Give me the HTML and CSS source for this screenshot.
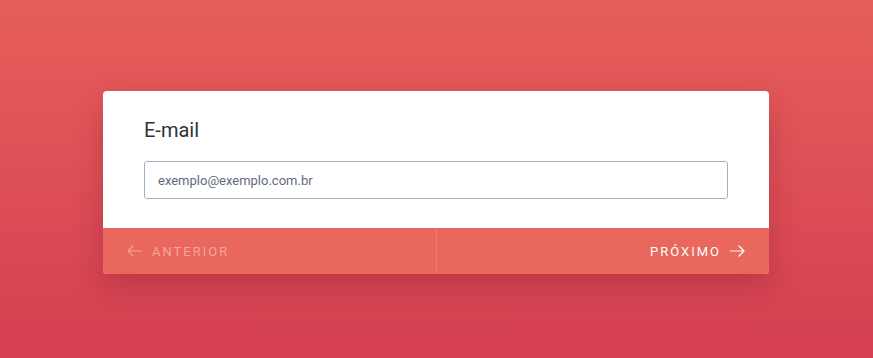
FILE: index.html
```html
<!DOCTYPE html>
<html lang="pt-BR">
<head>
<meta charset="utf-8">
<title>E-mail</title>
<link rel="stylesheet" href="styles.css">
</head>
<body>
<div class="stage">
  <div class="card">
    <div class="card-body">
      <label class="label" for="email">E-mail</label>
      <input id="email" class="field" type="text" placeholder="exemplo@exemplo.com.br">
    </div>
    <div class="card-footer">
      <button class="nav nav-prev" type="button">
        <svg class="arrow" width="15" height="12" viewBox="0 0 15 12" aria-hidden="true"><path d="M14.5 6H1M6 1L1 6l5 5" fill="none" stroke="currentColor" stroke-width="1.2" stroke-linecap="round" stroke-linejoin="round"/></svg>
        <span>ANTERIOR</span>
      </button>
      <button class="nav nav-next" type="button">
        <span>PRÓXIMO</span>
        <svg class="arrow" width="15" height="12" viewBox="0 0 15 12" aria-hidden="true"><path d="M0.5 6H14M9 1l5 5-5 5" fill="none" stroke="currentColor" stroke-width="1.2" stroke-linecap="round" stroke-linejoin="round"/></svg>
      </button>
    </div>
  </div>
</div>
</body>
</html>
```
FILE: styles.css
```css
* { box-sizing: border-box; }
html, body { margin: 0; height: 100%; }
body {
  font-family: Roboto, "Liberation Sans", sans-serif;
  background: linear-gradient(180deg, #e65f5a 0%, #d43f52 100%);
}
.stage {
  height: 358px;
  display: flex;
  justify-content: center;
  padding: 91px 1px 0 0;
}
.card {
  width: 666px;
  height: 183px;
  background: #fff;
  border-radius: 4px;
  box-shadow: 0 12px 28px rgba(110, 20, 40, 0.28);
  display: flex;
  flex-direction: column;
  overflow: hidden;
}
.card-body {
  height: 137px;
  padding: 27px 41px 0 41px;
  display: flex;
  flex-direction: column;
}
.label {
  font-size: 20px;
  color: #2f3338;
  line-height: 24px;
  margin-bottom: 19px;
}
.field {
  width: 584px;
  height: 38px;
  border: 1px solid #a3b1c2;
  border-radius: 3px;
  padding: 0 13px;
  font-family: Roboto, "Liberation Sans", sans-serif;
  font-size: 13px;
  color: #5a6478;
  outline: none;
}
.field::placeholder { color: #5f6a80; opacity: 1; }
.card-footer {
  flex: 1;
  display: flex;
  background: #e9675c;
}
.nav {
  flex: 1;
  display: flex;
  align-items: center;
  gap: 10px;
  border: 0;
  background: transparent;
  font-family: Roboto, "Liberation Sans", sans-serif;
  font-size: 13px;
  font-weight: 400;
  letter-spacing: 2px;
  padding: 0 24px;
  cursor: pointer;
}
.nav-prev {
  color: #f4a69d;
  border-right: 1px solid #ee7a70;
  justify-content: flex-start;
}
.nav-next {
  color: #ffffff;
  justify-content: flex-end;
  gap: 9px;
}
.arrow { display: block; }
```
